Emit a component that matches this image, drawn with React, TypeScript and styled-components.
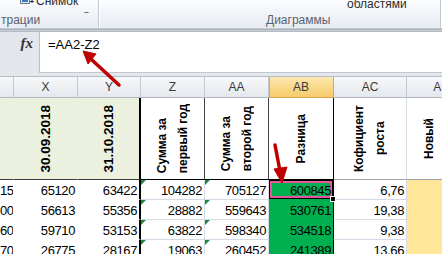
import styled, { createGlobalStyle } from "styled-components";

const GlobalStyle = createGlobalStyle`
  html, body { margin: 0; padding: 0; }
  body { background: #fff; font-family: "Liberation Sans", Arial, sans-serif; }
`;

const Page = styled.div`
  position: relative;
  width: 442px;
  height: 254px;
  overflow: hidden;
  background: #fff;
`;

/* ---------- ribbon ---------- */

const Ribbon = styled.div`
  display: flex;
  height: 28px;
  background: linear-gradient(#fcfdfe, #f1f4f8 45%, #e8edf3);
`;

const RibbonEdge = styled.div`
  height: 3px;
  background: linear-gradient(#d3d8de, #a7aeb6 50%, #dde1e6);
`;

const Group = styled.div<{ $w: number }>`
  flex: none;
  width: ${(p) => p.$w}px;
  display: flex;
  flex-direction: column;
  border-right: 1px solid #c4cad1;
  box-shadow: 1px 0 0 #ffffff;
`;

const GroupTop = styled.div`
  height: 13px;
  display: flex;
  align-items: flex-start;
  overflow: hidden;
`;

const GroupLabel = styled.div<{ $indent: number }>`
  padding-left: ${(p) => p.$indent}px;
  font-size: 12px;
  line-height: 14px;
  color: #5a6270;
  white-space: nowrap;
`;

const TopText = styled.span<{ $lift: number; $gap: number }>`
  margin-top: ${(p) => -p.$lift}px;
  margin-left: ${(p) => p.$gap}px;
  font-size: 12px;
  line-height: 12px;
  color: #2d2d2d;
  white-space: nowrap;
`;

const CaretBox = styled.span<{ $gap: number; $top: number }>`
  display: block;
  margin-left: ${(p) => p.$gap}px;
  margin-top: ${(p) => p.$top}px;
  width: 5px;
  height: 3px;
`;

function Caret({ gap, top = 2 }: { gap: number; top?: number }) {
  return (
    <CaretBox $gap={gap} $top={top}>
      <svg width="5" height="3" viewBox="0 0 5 3">
        <path d="M0 0h5L2.5 3z" fill="#6b6b6b" />
      </svg>
    </CaretBox>
  );
}

const SnapIcon = styled.svg`
  display: block;
  margin-left: 20px;
  flex: none;
`;

/* ---------- formula bar ---------- */

const FormulaBar = styled.div`
  display: flex;
  height: 41px;
  border-top: 1px solid #b4bac2;
  background: #e3e7ec;
`;

const FxBox = styled.div`
  width: 39px;
  flex: none;
  box-sizing: border-box;
  padding: 3px 6px 0 0;
  text-align: right;
  font: italic bold 15px/16px "Liberation Serif", "Times New Roman", serif;
  color: #333;
`;

const FormulaInput = styled.div`
  flex: 1;
  background: #fff;
  border-left: 1px solid #b9bfc7;
  border-bottom: 1px solid #c2c7ce;
  padding: 5px 0 0 8px;
  font-size: 13px;
  line-height: 15px;
  color: #000;
`;

const Strip = styled.div`
  height: 3px;
  background: #e4e7eb;
  border-bottom: 1px solid #b7bdc5;
`;

/* ---------- sheet ---------- */

const Sheet = styled.div`
  display: grid;
  grid-template-columns: 14px 64px 63px 64px 64px 65px 73px 70px;
  grid-template-rows: 21px 82px repeat(4, 20px);
`;

const ColHead = styled.div<{ $active?: boolean }>`
  box-sizing: border-box;
  display: flex;
  align-items: center;
  justify-content: center;
  font-size: 12px;
  color: #3a3a3a;
  border-right: 1px solid ${(p) => (p.$active ? "#e2a548" : "#c4c9d0")};
  border-bottom: 1px solid ${(p) => (p.$active ? "#e2a548" : "#b3b9c1")};
  box-shadow: ${(p) => (p.$active ? "inset 1px 0 0 #e2a548" : "none")};
  background: ${(p) =>
    p.$active
      ? "linear-gradient(#fde8b2, #f9d684 60%, #f6cc6d)"
      : "linear-gradient(#f7f8fa, #e4e8ed)"};
  overflow: hidden;
`;

const TitleCell = styled.div<{ $bg: string; $right: string; $bottom: string; $start?: number }>`
  box-sizing: border-box;
  display: flex;
  align-items: center;
  justify-content: ${(p) => (p.$start !== undefined ? "flex-start" : "center")};
  padding-left: ${(p) => p.$start ?? 0}px;
  background: ${(p) => p.$bg};
  border-right: ${(p) => p.$right};
  border-bottom: ${(p) => p.$bottom};
  overflow: hidden;
`;

const VText = styled.div<{ $size: number; $align?: string }>`
  writing-mode: vertical-rl;
  transform: rotate(180deg);
  font-weight: bold;
  font-size: ${(p) => p.$size}px;
  line-height: 21px;
  color: #000;
  text-align: ${(p) => p.$align ?? "center"};
  white-space: pre;
`;

const NumCell = styled.div<{ $bg: string; $right: string; $bottom: string; $flag?: boolean }>`
  position: relative;
  box-sizing: border-box;
  background: ${(p) => p.$bg};
  border-right: ${(p) => p.$right};
  border-bottom: ${(p) => p.$bottom};
  padding: 1px 2px 0 0;
  text-align: right;
  font-size: 13px;
  letter-spacing: -0.4px;
  line-height: 20px;
  color: #000;
  overflow: hidden;
  white-space: nowrap;

  &::before {
    content: "";
    display: ${(p) => (p.$flag ? "block" : "none")};
    position: absolute;
    left: 0;
    top: 0;
    border-top: 5px solid #1f8a36;
    border-right: 5px solid transparent;
  }
`;

const Selected = styled(NumCell)`
  overflow: visible;
  box-shadow: inset 0 0 0 1px #000, inset 0 0 0 3px #e8559c;
`;

const FillHandle = styled.span`
  position: absolute;
  right: -3px;
  bottom: -3px;
  width: 4px;
  height: 4px;
  background: #000;
  border: 1px solid #fff;
  z-index: 2;
`;

const Overlay = styled.svg`
  position: absolute;
  left: 0;
  top: 0;
  pointer-events: none;
`;

const GRID = "1px solid #d4dbe6";
const BLACK = "1px solid #000";
const WHITE = "1px solid #fff";

const letters = ["", "X", "Y", "Z", "AA", "AB", "AC", "AD"];

const rows = [
  ["15", "65120", "63422", "104282", "705127", "600845", "6,76"],
  ["00", "56613", "55356", "28882", "559643", "530761", "19,38"],
  ["60", "59710", "53153", "63822", "598340", "534518", "9,38"],
  ["70", "26775", "28167", "19063", "260452", "241389", "13,66"],
];

export default function App() {
  return (
    <Page>
      <GlobalStyle />
      <Ribbon>
        <Group $w={98}>
          <GroupTop>
            <SnapIcon width="14" height="4" viewBox="0 0 14 4">
              <rect x="0.5" y="-2" width="9" height="5.5" fill="#dbe7f5" stroke="#6d7b8c" />
              <rect x="2" y="0" width="6" height="2" fill="#3f79c1" />
              <path d="M10 1.5h4M12 0v3" stroke="#2a3a52" strokeWidth="1.2" />
            </SnapIcon>
            <TopText $lift={5} $gap={2}>Снимок</TopText>
            <Caret gap={6} top={1} />
          </GroupTop>
          <GroupLabel $indent={1}>трации</GroupLabel>
        </Group>
        <Group $w={341}>
          <GroupTop>
            <Caret gap={40} />
            <Caret gap={104} />
            <Caret gap={56} />
            <TopText $lift={2} $gap={33}>областями</TopText>
            <Caret gap={2} top={3} />
          </GroupTop>
          <GroupLabel $indent={167}>Диаграммы</GroupLabel>
        </Group>
      </Ribbon>
      <RibbonEdge />

      <FormulaBar>
        <FxBox>fx</FxBox>
        <FormulaInput>=AA2-Z2</FormulaInput>
      </FormulaBar>
      <Strip />

      <Sheet>
        {letters.map((l) => (
          <ColHead key={l || "W"} $active={l === "AB"}>
            {l}
          </ColHead>
        ))}

        <TitleCell $bg="#ebf1de" $right="1px solid #ebf1de" $bottom="1px solid #3a3a3a" />
        <TitleCell $bg="#ebf1de" $right="1px solid #ebf1de" $bottom="1px solid #3a3a3a">
          <VText $size={13.5}>30.09.2018</VText>
        </TitleCell>
        <TitleCell $bg="#ebf1de" $right="2px solid #000" $bottom="1px solid #3a3a3a">
          <VText $size={13.5}>31.10.2018</VText>
        </TitleCell>
        <TitleCell $bg="#fff" $right="1px solid #444" $bottom={BLACK}>
          <VText $size={12} $align="start">{"Сумма за\nпервый год"}</VText>
        </TitleCell>
        <TitleCell $bg="#fff" $right="1px solid #444" $bottom={BLACK}>
          <VText $size={12} $align="start">{"Сумма за\nвторой год"}</VText>
        </TitleCell>
        <TitleCell $bg="#fff" $right={BLACK} $bottom={BLACK}>
          <VText $size={12}>Разница</VText>
        </TitleCell>
        <TitleCell $bg="#fff" $right={GRID} $bottom="1px solid #9aa1ab">
          <VText $size={12}>{"Кофициент\nроста"}</VText>
        </TitleCell>
        <TitleCell $bg="#fff" $right={GRID} $bottom="1px solid #9aa1ab" $start={12}>
          <VText $size={12}>Новый</VText>
        </TitleCell>

        {rows.map((r, i) => [
          <NumCell key={`w${i}`} $bg="#fff" $right={WHITE} $bottom={WHITE}>{r[0]}</NumCell>,
          <NumCell key={`x${i}`} $bg="#fff" $right={WHITE} $bottom={WHITE}>{r[1]}</NumCell>,
          <NumCell key={`y${i}`} $bg="#fff" $right="2px solid #000" $bottom={WHITE}>{r[2]}</NumCell>,
          <NumCell key={`z${i}`} $bg="#fff" $right={GRID} $bottom={GRID} $flag>{r[3]}</NumCell>,
          <NumCell key={`a${i}`} $bg="#fff" $right={GRID} $bottom={GRID} $flag>{r[4]}</NumCell>,
          i === 0 ? (
            <Selected key={`b${i}`} $bg="#00b050" $right={BLACK} $bottom="1px solid #00b050">
              {r[5]}
              <FillHandle />
            </Selected>
          ) : (
            <NumCell key={`b${i}`} $bg="#00b050" $right={BLACK} $bottom="1px solid #00b050">{r[5]}</NumCell>
          ),
          <NumCell key={`c${i}`} $bg="#fff" $right={GRID} $bottom={GRID}>{r[6]}</NumCell>,
          <NumCell key={`d${i}`} $bg="#ffe699" $right="1px solid #ffe699" $bottom="1px solid #ffe699" />,
        ])}
      </Sheet>

      <Overlay width="442" height="254" viewBox="0 0 442 254">
        <g fill="#c00000" stroke="#c00000">
          <line x1="119" y1="85" x2="92" y2="60" strokeWidth="3.5" strokeLinecap="round" />
          <polygon points="83,51 96,54 88,64" strokeWidth="1" strokeLinejoin="round" />
          <line x1="275" y1="145" x2="280" y2="171" strokeWidth="3.5" strokeLinecap="round" />
          <polygon points="282,183 274,169 287,167" strokeWidth="1" strokeLinejoin="round" />
        </g>
      </Overlay>
    </Page>
  );
}
